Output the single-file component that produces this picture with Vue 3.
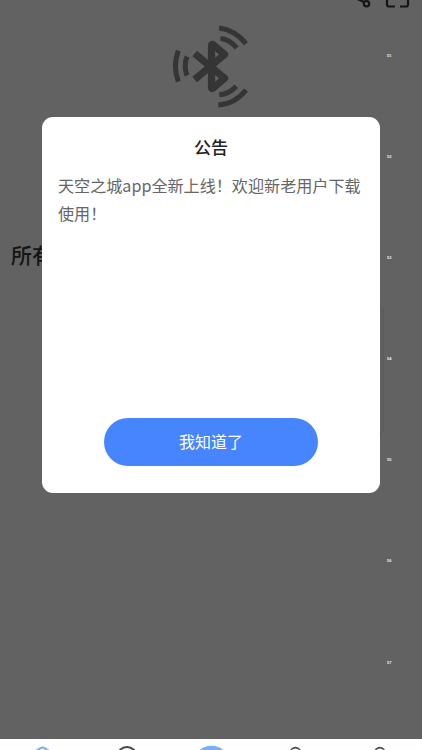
<script setup>
  import { ref } from 'vue'

  const showNotice = ref(true);

  const notice = {
    title: "公告",
    content: "天空之城app全新上线！欢迎新老用户下载使用！",
    button: "我知道了",
  };

  const marks = [51, 52, 53, 54, 55, 56, 57];
</script>

<template>
  <div class="page">
    <main class="home">
      <header class="topBar">
        <svg class="bluetooth" viewBox="170 20 82 92" fill="none" stroke="#353535">
          <path d="M194.7 53.5L224.6 78.3L213.5 87.9Q211.5 89.5 211.5 87V46Q211.5 43.5 213.5 45.1L224.6 54.6L194.7 79.6" stroke-width="7.2" stroke-linejoin="round" />
          <g stroke-width="5">
            <path d="M178.3 50.7Q172.6 66 178.3 81.7" />
            <path d="M187 56.5Q183.4 66 187 75.5" />
            <path d="M219 28Q235 30 246 43.6" />
            <path d="M220.5 38.5Q230 39.5 236.7 48" />
            <path d="M218.3 105Q235 104 246 90" />
            <path d="M219.3 94.7Q229 94 236.3 86.2" />
          </g>
        </svg>
        <svg class="actions" viewBox="350 0 62 10" fill="none" stroke="#151515" stroke-width="2.2">
          <path d="M353 -3L364 2" />
          <circle cx="366.5" cy="3.7" r="2.7" />
          <path d="M387 0V4.5Q387 6.5 389 6.5H395M400 6.5H406Q408 6.5 408 4.5V0" />
        </svg>
      </header>
      <h2 class="devices">所有设备</h2>
      <div class="deviceCard"></div>
    </main>

    <nav class="tabBar">
      <svg viewBox="0 739 422 11" fill="none" stroke-width="2">
        <path d="M34 752L41 747.8Q42.5 747 44 747.8L51 752" stroke="#78aee5" />
        <circle cx="127" cy="756.5" r="9.5" stroke="#484848" />
        <circle cx="211.5" cy="765" r="19.2" fill="#78b0f2" />
        <circle cx="295.5" cy="752.5" r="4.9" stroke="#484848" stroke-width="1.6" />
        <circle cx="379.8" cy="752.5" r="4.9" stroke="#484848" stroke-width="1.6" />
      </svg>
    </nav>

    <div v-if="showNotice" class="overlay">
      <section class="notice">
        <h1>{{ notice.title }}</h1>
        <p>{{ notice.content }}</p>
        <button @click="showNotice = false">{{ notice.button }}</button>
      </section>
      <ul class="marks">
        <li v-for="mark in marks" :key="mark">{{ mark }}</li>
      </ul>
    </div>
  </div>
</template>

<style>
  body {
    margin: 0;
    overflow: hidden;
  }
</style>

<style scoped>
  .page {
    position: relative;
    display: flex;
    flex-direction: column;
    width: 422px;
    height: 750px;
    overflow: hidden;
    background-color: #626262;
    font-family: "Noto Sans CJK SC", sans-serif;
  }

  .home {
    flex: 1;
  }

  .topBar {
    position: relative;
    height: 239px;
  }

  .bluetooth {
    display: block;
    width: 82px;
    height: 92px;
    padding: 20px 0 0 170px;
  }

  .actions {
    position: absolute;
    top: 0;
    right: 10px;
    width: 62px;
    height: 10px;
  }

  .devices {
    margin: 0 0 0 11px;
    color: #151515;
    font-size: 21px;
    font-weight: 500;
    line-height: 30px;
  }

  .deviceCard {
    box-sizing: border-box;
    height: 138px;
    margin: 32px 38px 0 211px;
    border: 1px solid #5b5b5b;
    border-radius: 12px;
    background-color: #606060;
  }

  .tabBar {
    flex: none;
    height: 11px;
    background-color: #fefefe;
  }

  .tabBar svg {
    display: block;
    width: 422px;
    height: 11px;
  }

  .overlay {
    position: absolute;
    inset: 0;
  }

  .notice {
    display: flex;
    flex-direction: column;
    align-items: center;
    box-sizing: border-box;
    width: 338px;
    height: 376px;
    margin: 117px 0 0 42px;
    padding: 16px 16px 27px;
    border-radius: 11px;
    background-color: #fff;
  }

  .notice h1 {
    margin: 0;
    color: #222;
    font-size: 17px;
    font-weight: 500;
    line-height: 28px;
  }

  .notice p {
    width: 306px;
    margin: 10px 0 0;
    color: #666;
    font-size: 16.1px;
    font-weight: 400;
    line-height: 28px;
  }

  .notice button {
    width: 214px;
    height: 48px;
    margin-top: auto;
    padding: 0 0 2px;
    border: none;
    border-radius: 24px;
    background-color: #4785ff;
    color: #fff;
    font-family: inherit;
    font-size: 16px;
    font-weight: 400;
    line-height: 46px;
  }

  .marks {
    position: absolute;
    top: 53px;
    left: 387px;
    display: grid;
    grid-auto-rows: 101.1px;
    margin: 0;
    padding: 0;
    list-style: none;
    color: #eee;
    font-family: "Liberation Sans", sans-serif;
    font-size: 4px;
    font-weight: 700;
    line-height: 5px;
  }
</style>
